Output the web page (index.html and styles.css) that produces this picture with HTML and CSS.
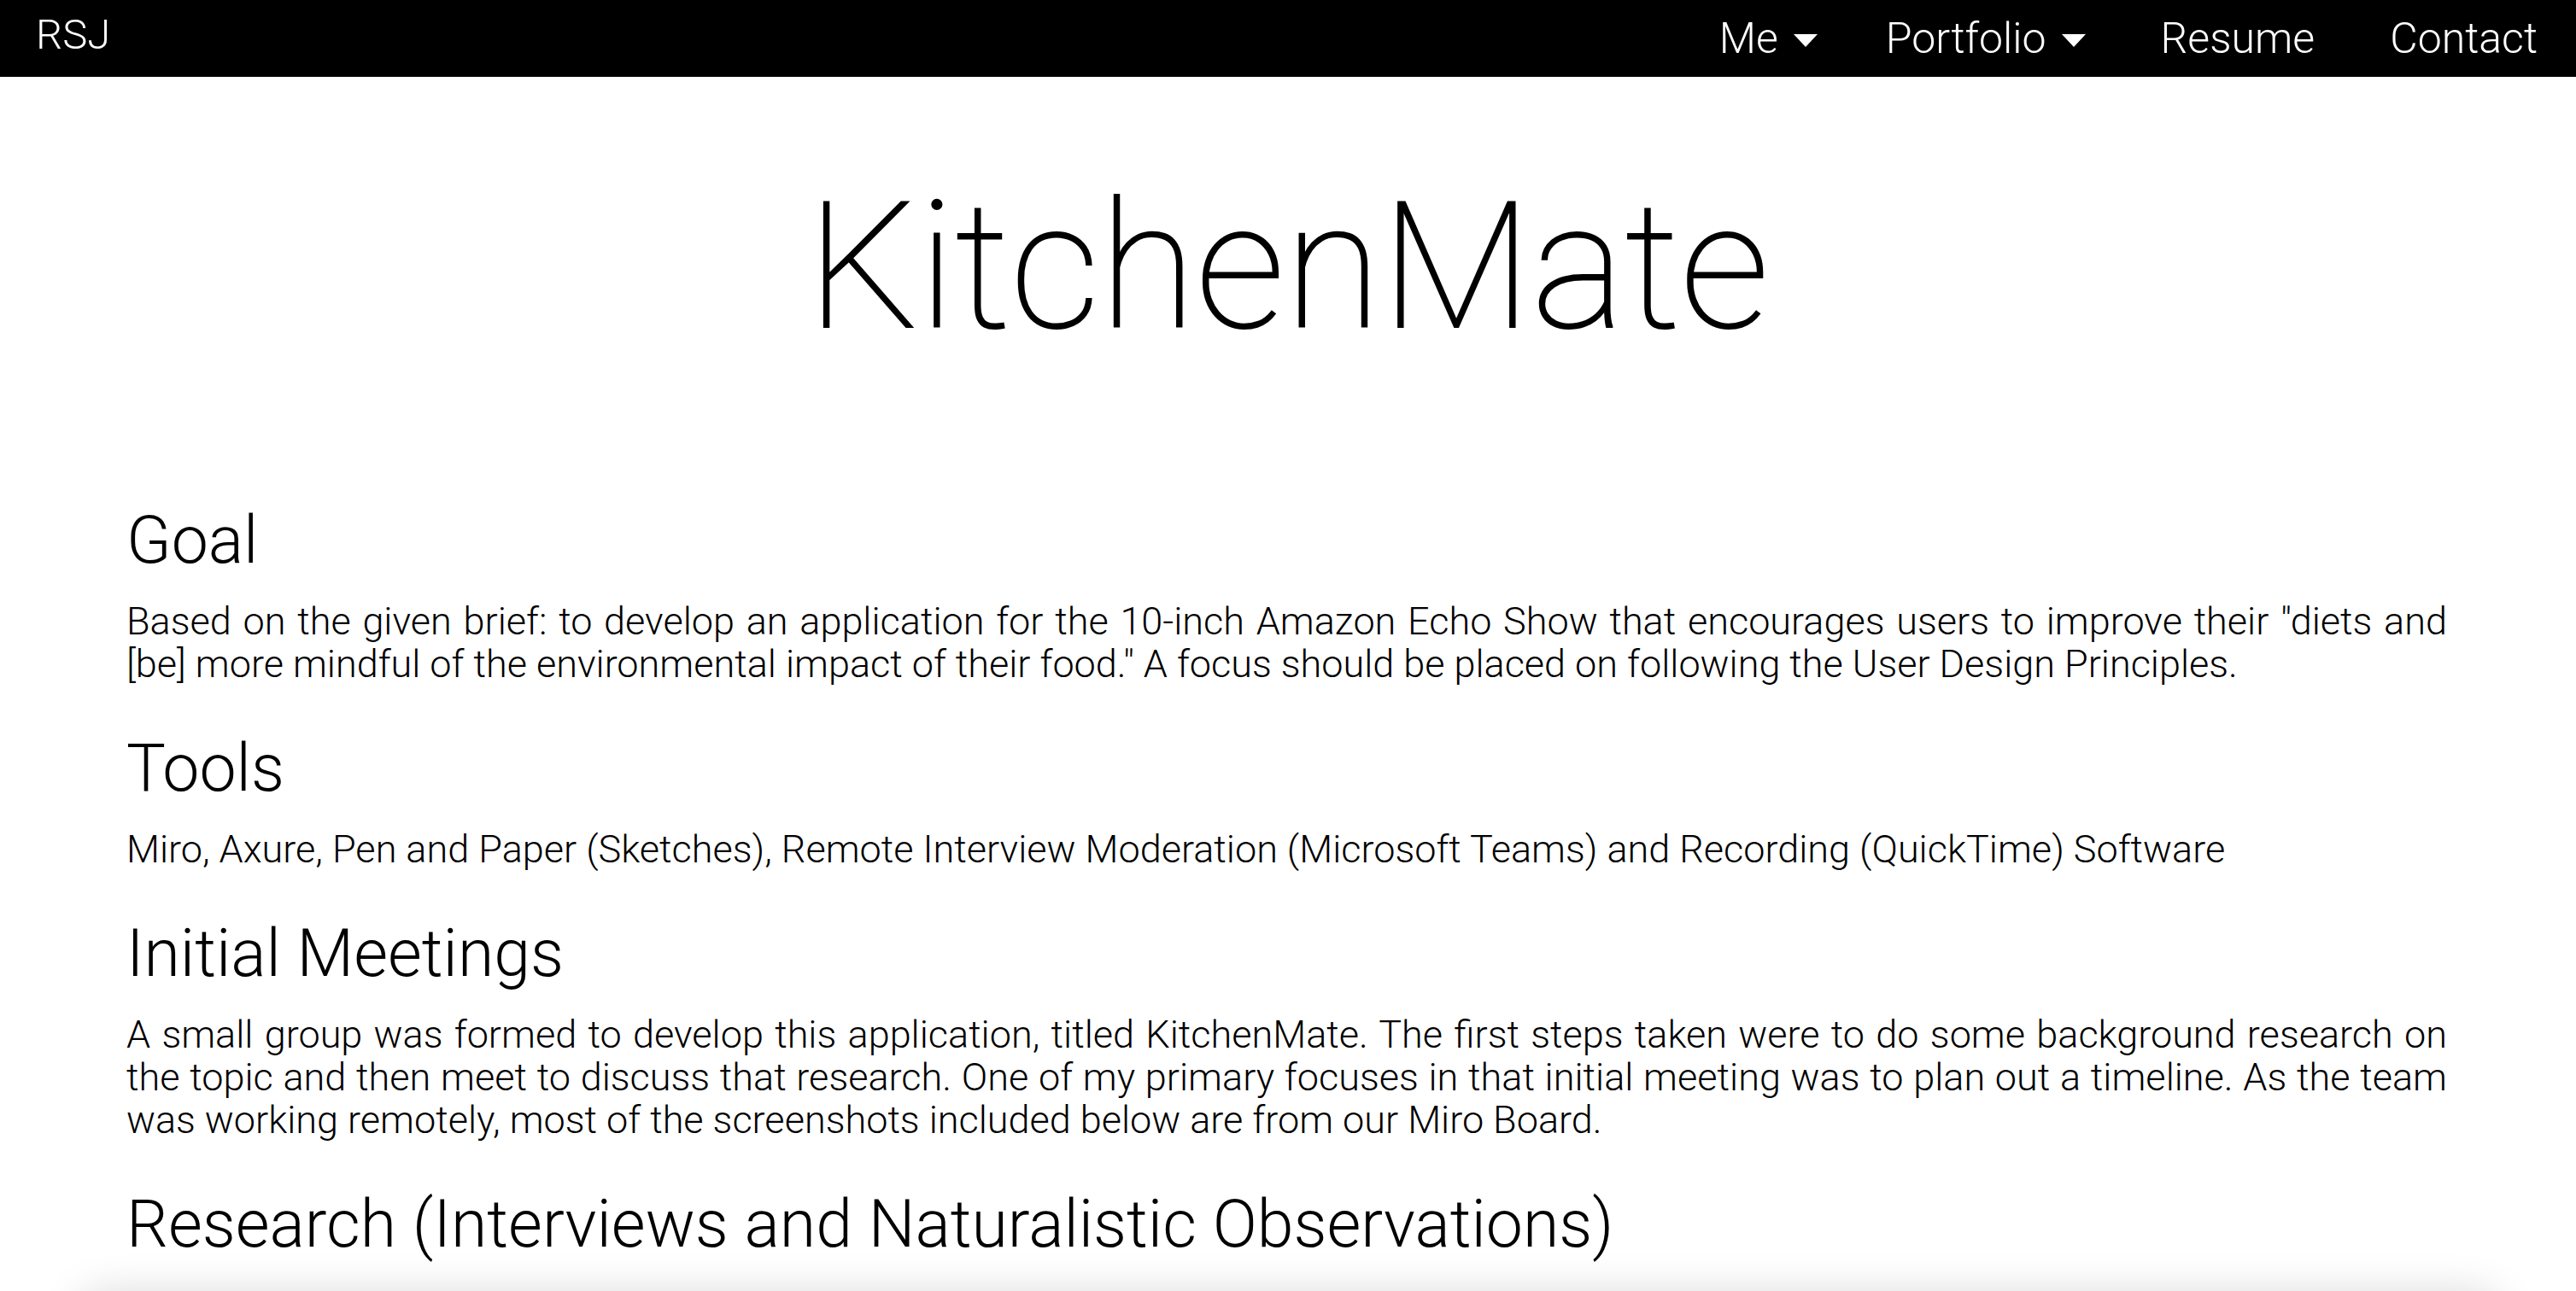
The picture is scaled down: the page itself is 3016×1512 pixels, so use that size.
FILE: index.html
```html
<!DOCTYPE html>
<html lang="en">
<head>
<meta charset="utf-8">
<title>KitchenMate</title>
<link rel="stylesheet" href="styles.css">
</head>
<body>
<nav class="topnav">
  <a class="brand" href="#">RSJ</a>
  <div class="menu">
    <a class="menu-item" href="#">Me<span class="caret"></span></a>
    <a class="menu-item" href="#">Portfolio<span class="caret"></span></a>
    <a class="menu-item" href="#">Resume</a>
    <a class="menu-item" href="#">Contact</a>
  </div>
</nav>
<h1 class="title">KitchenMate</h1>
<main class="content">
  <h2 class="section-title">Goal</h2>
  <p class="section-text">Based on the given brief: to develop an application for the 10-inch Amazon Echo Show that encourages users to improve their "diets and [be] more mindful of the environmental impact of their food." A focus should be placed on following the User Design Principles.</p>
  <h2 class="section-title">Tools</h2>
  <p class="section-text">Miro, Axure, Pen and Paper (Sketches), Remote Interview Moderation (Microsoft Teams) and Recording (QuickTime) Software</p>
  <h2 class="section-title">Initial Meetings</h2>
  <p class="section-text">A small group was formed to develop this application, titled KitchenMate. The first steps taken were to do some background research on the topic and then meet to discuss that research. One of my primary focuses in that initial meeting was to plan out a timeline. As the team was working remotely, most of the screenshots included below are from our Miro Board.</p>
  <h2 class="section-title">Research (Interviews and Naturalistic Observations)</h2>
  <div class="shot"></div>
</main>
</body>
</html>
```
FILE: styles.css
```css
html, body {
  margin: 0;
  padding: 0;
  background: #ffffff;
}
body {
  font-family: Roboto, "Liberation Sans", Arial, sans-serif;
  font-weight: 300;
  color: #000000;
}
.topnav {
  height: 90px;
  background: #000000;
  display: flex;
  align-items: center;
  justify-content: space-between;
  padding: 0 45px 0 42px;
}
.brand {
  color: #ffffff;
  text-decoration: none;
  font-size: 49px;
  line-height: 56px;
  margin-top: -8px;
}
.menu {
  display: flex;
  align-items: center;
  gap: 88px;
}
.menu-item {
  color: #ffffff;
  text-decoration: none;
  font-size: 50px;
  line-height: 60px;
  display: flex;
  align-items: center;
}
.menu-item:first-child {
  margin-right: -8px;
}
.caret {
  width: 0;
  height: 0;
  border-left: 14px solid transparent;
  border-right: 14px solid transparent;
  border-top: 15px solid #ffffff;
  margin-left: 18px;
  margin-top: 4px;
}
.title {
  margin: 108px 0 161px;
  text-align: center;
  font-weight: 100;
  font-size: 206px;
  line-height: 230px;
  -webkit-text-stroke: 2px #000000;
}
.content {
  width: 2717px;
  margin-left: 148px;
}
.section-title {
  margin: 0 0 26px;
  font-weight: 300;
  font-size: 77px;
  line-height: 88px;
}
.section-text {
  margin: 0 0 53px;
  font-size: 45px;
  line-height: 50px;
  text-align: justify;
}
.shot {
  margin: 38px -56px 0 -50px;
  height: 800px;
  background: #ffffff;
  border-radius: 12px;
  box-shadow: 0 0 50px rgba(0, 0, 0, 0.16);
}
```
